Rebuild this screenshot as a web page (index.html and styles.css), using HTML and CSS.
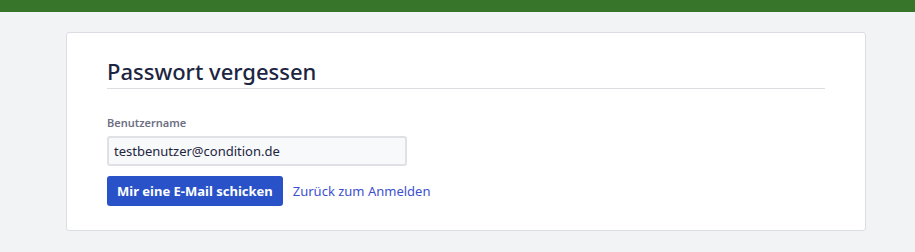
FILE: index.html
```html
<!DOCTYPE html>
<html lang="de">
<head>
    <meta charset="UTF-8">
    <meta name="viewport" content="width=device-width, initial-scale=1.0">
    <title>Passwort vergessen</title>
    <link rel="stylesheet" href="styles.css">
</head>
<body>

<div class="topbar"></div>

<div class="page">
    <div class="card">
        <h1 class="card-title">Passwort vergessen</h1>

        <form class="form" onsubmit="return false;">
            <label class="field-label" for="username">Benutzername</label>
            <input type="text" id="username" class="field-input" value="testbenutzer@condition.de">

            <div class="actions">
                <button type="submit" class="btn-primary">Mir eine E-Mail schicken</button>
                <a href="#" class="link">Zurück zum Anmelden</a>
            </div>
        </form>
    </div>
</div>

</body>
</html>
```

FILE: styles.css
```css
body {
    font-family: 'Noto Sans', 'Open Sans', sans-serif;
    background-color: #f2f3f5;
    margin: 0;
    color: #1c2541;
}
.topbar {
    height: 12px;
    background-color: #36752a;
}
.page {
    padding: 20px 49px 0 66px;
}
.card {
    background-color: #ffffff;
    border: 1px solid #dcdde3;
    border-radius: 3px;
    padding: 21px 40px 24px 40px;
}
.card-title {
    margin: 0;
    font-size: 22px;
    font-weight: 500;
    line-height: 34px;
    color: #1c2541;
    border-bottom: 1px solid #dcdde0;
}
.form {
    display: flex;
    flex-direction: column;
    align-items: flex-start;
    margin-top: 26px;
}
.field-label {
    font-size: 11px;
    font-weight: 600;
    color: #6e6f85;
    line-height: 16px;
    margin-bottom: 5px;
}
.field-input {
    width: 300px;
    height: 30px;
    box-sizing: border-box;
    border: 2px solid #e0e1e5;
    border-radius: 3px;
    background-color: #f8f9fb;
    padding: 0 5px;
    font-family: inherit;
    font-size: 13px;
    color: #1c2541;
}
.actions {
    display: flex;
    align-items: center;
    gap: 10px;
    margin-top: 10px;
}
.btn-primary {
    height: 30px;
    padding: 0 10px;
    background-color: #2952c8;
    color: white;
    border: none;
    border-radius: 3px;
    font-family: inherit;
    font-size: 13px;
    font-weight: 700;
    cursor: pointer;
}
.btn-primary:hover {
    background-color: #1f43ad;
}
.link {
    font-size: 13px;
    color: #3d50cf;
    text-decoration: none;
}
```
